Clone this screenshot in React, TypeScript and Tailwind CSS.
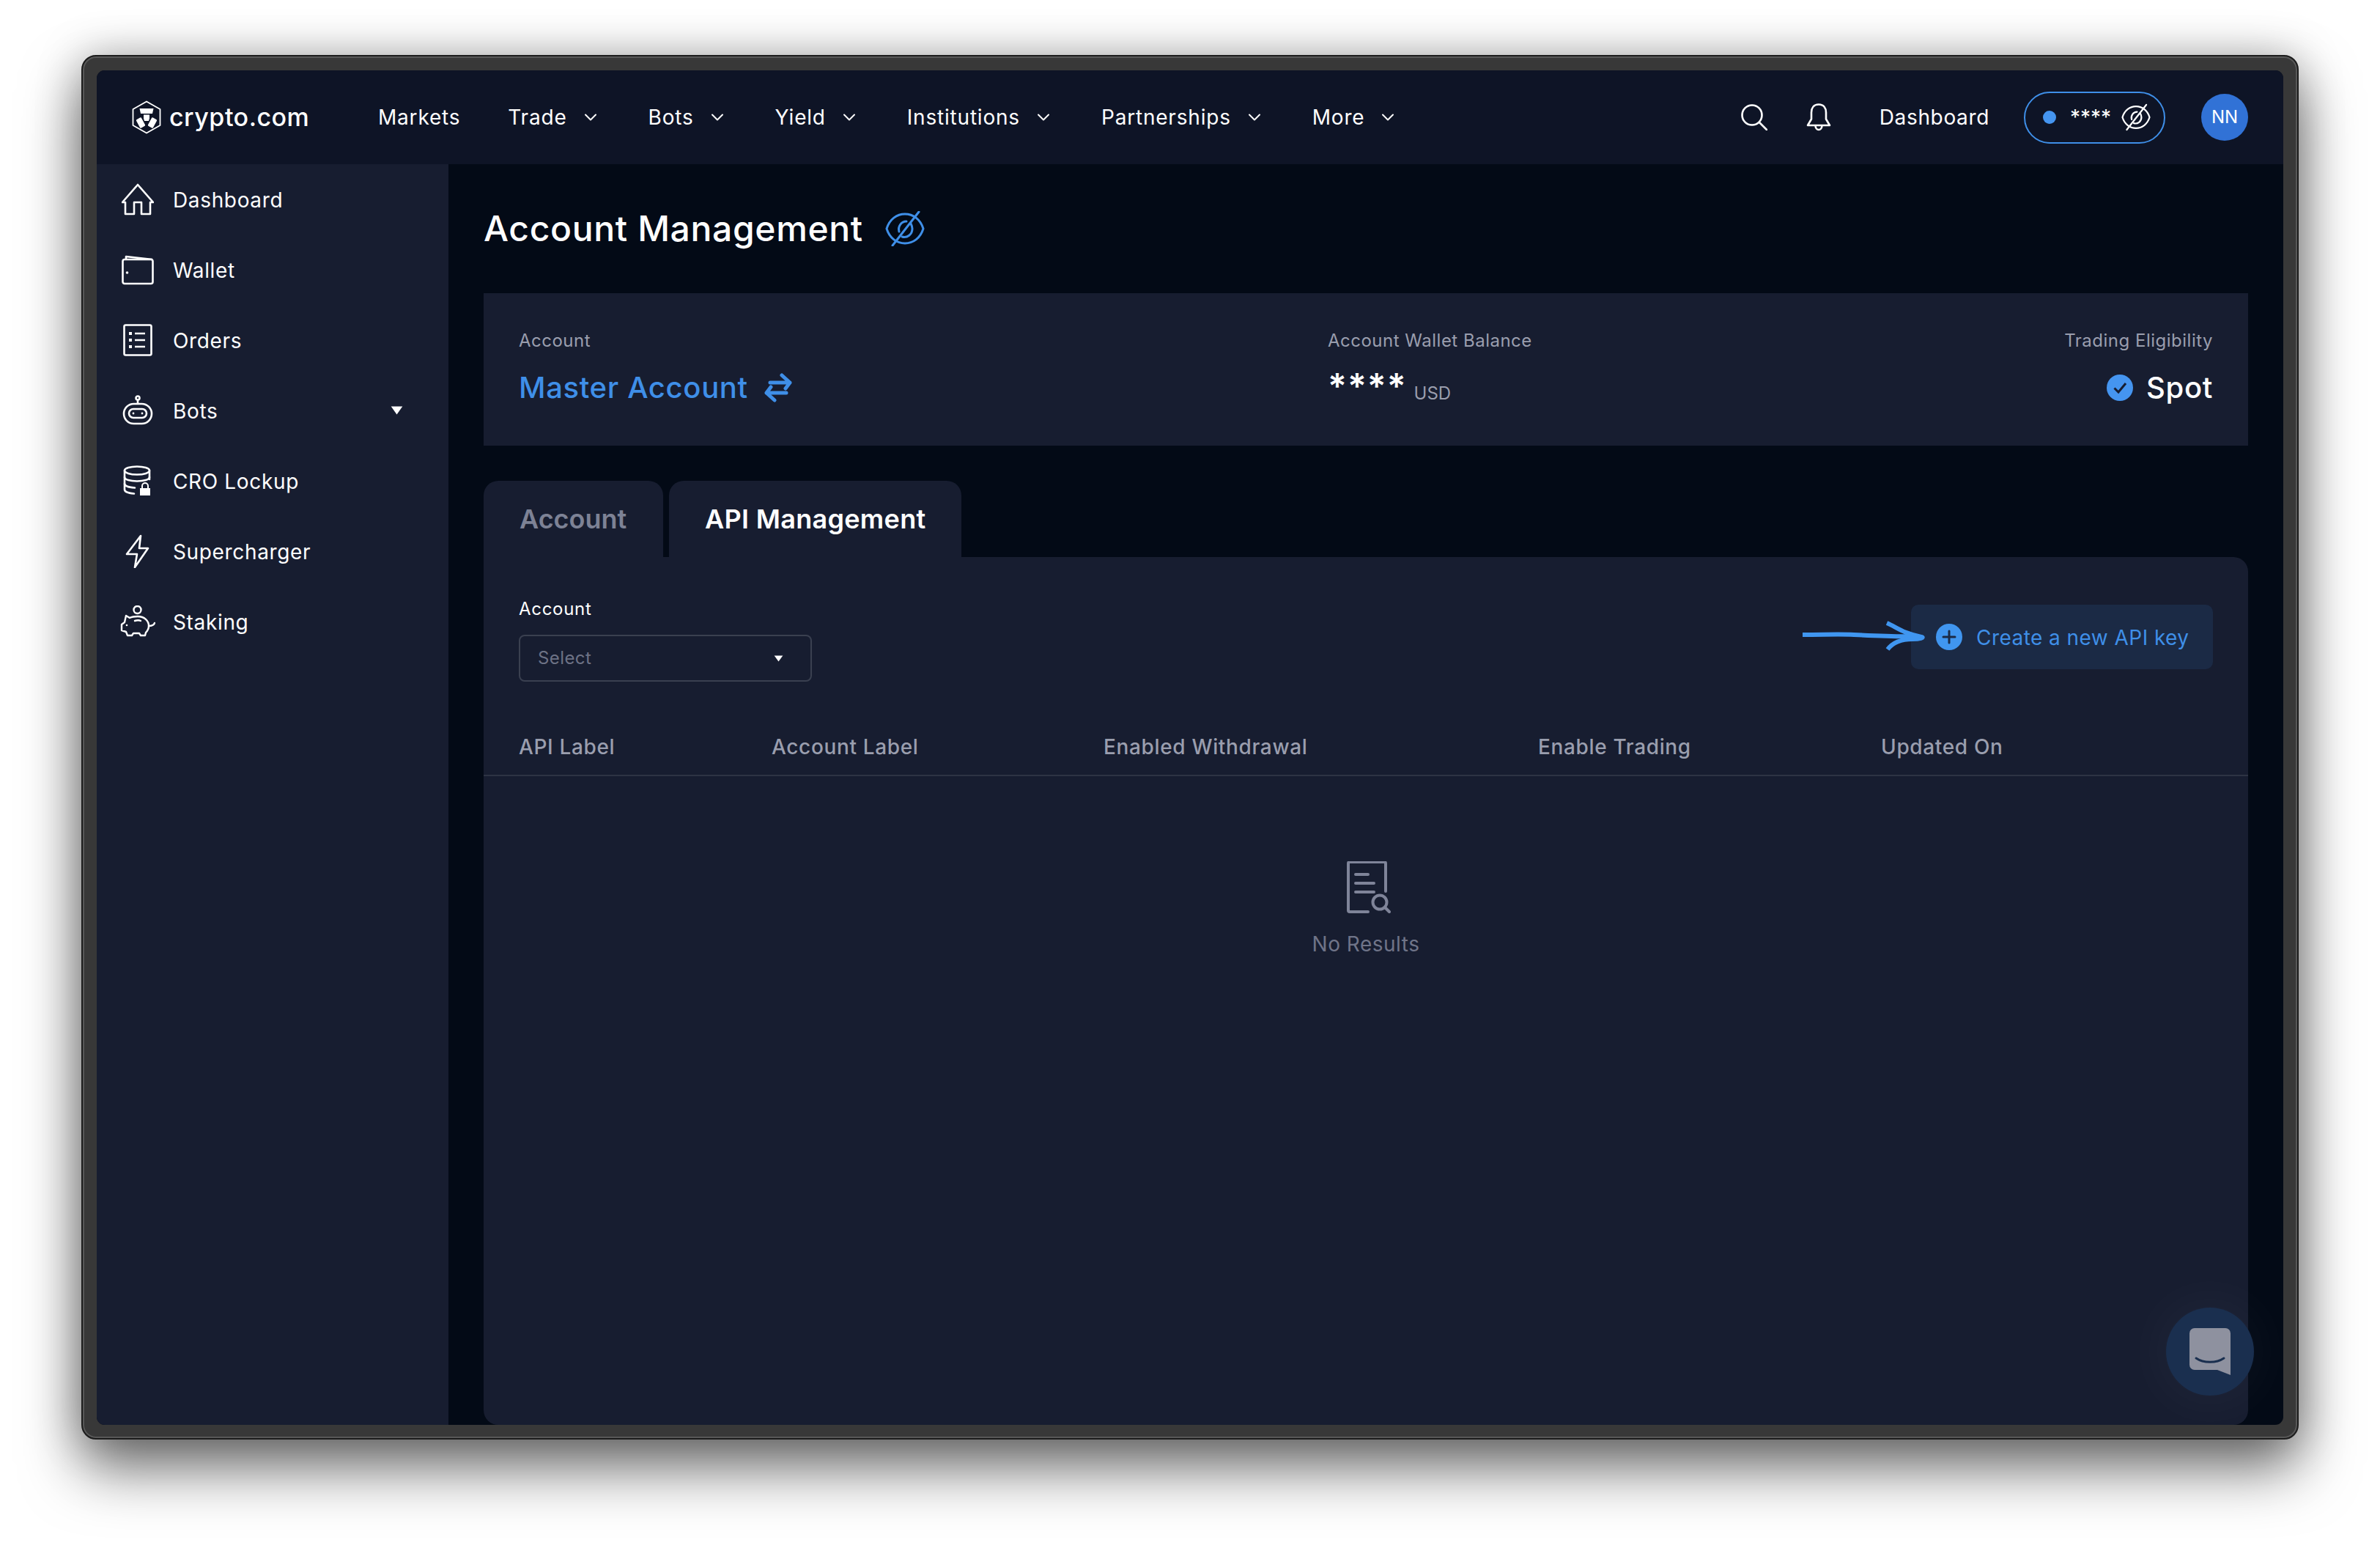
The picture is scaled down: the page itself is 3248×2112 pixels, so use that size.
import { ChevronDown } from 'lucide-react';

const NAV_ITEMS = [
  { label: 'Markets', menu: false },
  { label: 'Trade', menu: true },
  { label: 'Bots', menu: true },
  { label: 'Yield', menu: true },
  { label: 'Institutions', menu: true },
  { label: 'Partnerships', menu: true },
  { label: 'More', menu: true },
];

const COLUMNS = ['API Label', 'Account Label', 'Enabled Withdrawal', 'Enable Trading', 'Updated On'];

const Logo = () => (
  <svg viewBox="0 0 40 46" className="h-[46px] w-[40px]" fill="none">
    <path d="M20 1.500 38.500 12v22L20 44.500 1.500 34V12z" stroke="white" strokeWidth="1.800" strokeLinejoin="round" />
    <path d="M10.500 11h19l-1.500 7H12z" fill="white" />
    <path d="M16 19.500h8v5l-1 3.500h-6l-1-3.500z" fill="white" />
    <rect x="8" y="24" width="8" height="13" rx="1.500" transform="rotate(-28 12 30.500)" fill="white" />
    <rect x="24" y="24" width="8" height="13" rx="1.500" transform="rotate(28 28 30.500)" fill="white" />
  </svg>
);

const EyeOff = ({ className }: { className: string }) => (
  <svg viewBox="0 0 54 48" className={className} fill="none" stroke="currentColor" strokeWidth="3" strokeLinecap="round" strokeLinejoin="round">
    <path d="M2 24C6 11 16 4 27 4s21 7 25 20c-4 13-14 20-25 20S6 37 2 24z" />
    <path d="M46 1 10 47" />
    <path d="M23 35c7 2 14-3 14-11 0-3-1-5-2-7" />
    <path d="M19 28c-2-7 3-14 10-14" />
  </svg>
);

const HomeIcon = () => (
  <svg viewBox="0 0 44 44" className="h-[44px] w-[44px]" fill="none" stroke="white" strokeWidth="2.600" strokeLinejoin="round">
    <path d="M22 2 43 26h-4v16H27V26H17v16H5V26H1z" />
  </svg>
);

const WalletIcon = () => (
  <svg viewBox="0 0 44 44" className="h-[44px] w-[44px]" fill="none" stroke="white" strokeWidth="2.600" strokeLinejoin="round">
    <rect x="1.500" y="8" width="41" height="33" rx="2.500" />
    <path d="M6 8V4l36 4" />
    <circle cx="7.500" cy="26" r="1.800" fill="white" stroke="none" />
  </svg>
);

const OrdersIcon = () => (
  <svg viewBox="0 0 44 44" className="h-[44px] w-[44px]" fill="none" stroke="white" strokeWidth="2.600" strokeLinejoin="round">
    <rect x="3.500" y="1.500" width="37" height="41" rx="2" />
    <path d="M18 13h14M18 22h14M18 31h14" />
    <path d="M10 13h4M10 22h4M10 31h4" strokeWidth="4" />
  </svg>
);

const BotsIcon = () => (
  <svg viewBox="0 0 44 44" className="h-[44px] w-[44px]" fill="none" stroke="white" strokeWidth="2.600">
    <circle cx="22" cy="5" r="2.500" />
    <path d="M22 8v5" />
    <rect x="3" y="13" width="38" height="27" rx="13.500" />
    <rect x="10" y="20" width="24" height="12" rx="6" />
    <circle cx="16" cy="26" r="1.400" fill="white" stroke="none" />
    <circle cx="28" cy="26" r="1.400" fill="white" stroke="none" />
  </svg>
);

const LockupIcon = () => (
  <svg viewBox="0 0 44 44" className="h-[44px] w-[44px]" fill="none" stroke="white" strokeWidth="2.600" strokeLinecap="round">
    <ellipse cx="21" cy="8" rx="17" ry="5.500" />
    <path d="M4 8v26c0 3 6 5 13 5.500" />
    <path d="M38 8v12" />
    <path d="M4 17c0 3.500 8 5.500 17 5.500S38 20.500 38 17" />
    <path d="M4 26c0 3 6 5 14 5.500" />
    <rect x="25" y="32" width="14" height="10" fill="white" stroke="none" />
    <path d="M28 32v-3a4 4 0 0 1 8 0v3" strokeWidth="2" />
  </svg>
);

const BoltIcon = () => (
  <svg viewBox="0 0 44 46" className="h-[46px] w-[44px]" fill="none" stroke="white" strokeWidth="2.600" strokeLinejoin="round">
    <path d="M26 2 7 27h14l-3 18 18-26H24z" />
  </svg>
);

const PiggyIcon = () => (
  <svg viewBox="0 0 48 44" className="h-[44px] w-[48px]" fill="none" stroke="white" strokeWidth="2.400" strokeLinecap="round" strokeLinejoin="round">
    <circle cx="23.500" cy="6" r="5" />
    <path d="M8 14l5 3c3-1.500 7-2 11-2 9 0 15 6 15 13 0 4-2 7-4 9l-1 4h-6l-2-3h-8l-2 3h-6l-2-5-6-2v-8l4-3z" />
    <path d="M39 28c3 0 7-1 8-4" />
    <path d="M20 21c3-1 6-1 8 0" />
    <circle cx="9" cy="27" r="1.300" fill="white" stroke="none" />
  </svg>
);

const SIDE_ITEMS = [
  { label: 'Dashboard', icon: <HomeIcon /> },
  { label: 'Wallet', icon: <WalletIcon /> },
  { label: 'Orders', icon: <OrdersIcon /> },
  { label: 'Bots', icon: <BotsIcon />, caret: true },
  { label: 'CRO Lockup', icon: <LockupIcon /> },
  { label: 'Supercharger', icon: <BoltIcon /> },
  { label: 'Staking', icon: <PiggyIcon /> },
];

const Caret = ({ className }: { className: string }) => (
  <svg viewBox="0 0 14 10" className={className} fill="white">
    <path d="M0.500 0.500h13L7 9.500z" />
  </svg>
);

const Header = () => (
  <header className="flex h-[128px] shrink-0 items-center bg-[#0e1426] pr-[48px] pl-[48px] text-white">
    <div className="flex w-[336px] items-center gap-[11px]">
      <Logo />
      <span className="text-[34px] leading-none font-medium tracking-[0.5px]">crypto.com</span>
    </div>
    <nav className="flex items-center gap-[65px] text-[28px] tracking-[0.8px]">
      {NAV_ITEMS.map(item => (
        <div key={item.label} className="flex items-center gap-[18px]">
          <span>{item.label}</span>
          {item.menu && <ChevronDown className="h-[28px] w-[28px]" strokeWidth={1.700} />}
        </div>
      ))}
    </nav>
    <div className="ml-auto flex items-center">
      <svg viewBox="0 0 36 36" className="h-[36px] w-[36px]" fill="none" stroke="white" strokeWidth="2.600" strokeLinecap="round">
        <circle cx="15" cy="15" r="13.500" />
        <path d="M25 25 35 35" />
      </svg>
      <svg viewBox="0 0 34 38" className="ml-[53px] h-[38px] w-[34px]" fill="none" stroke="white" strokeWidth="2.600" strokeLinejoin="round">
        <path d="M17 1.500c-7 0-10 5-10 11v9L2 30h30l-5-8.500v-9c0-6-3-11-10-11z" />
        <path d="M12.500 30c0 8 9 8 9 0" />
      </svg>
      <span className="ml-[66px] text-[28px] tracking-[0.65px]">Dashboard</span>
      <div className="ml-[47px] flex h-[71px] w-[193px] items-center rounded-full border-2 border-[#3f8fe8] pl-[24px]">
        <span className="h-[18px] w-[18px] rounded-full bg-[#4595f0]" />
        <span className="ml-[19px] text-[28px] leading-none">****</span>
        <EyeOff className="ml-[14px] h-[40px] w-[40px] text-white" />
      </div>
      <div className="ml-[49px] flex h-[64px] w-[64px] items-center justify-center rounded-full bg-[#3172d6] text-[24px]">NN</div>
    </div>
  </header>
);

const Sidebar = () => (
  <aside className="flex w-[480px] shrink-0 flex-col bg-[#171d30] text-white">
    {SIDE_ITEMS.map(item => (
      <div key={item.label} className="flex h-[96px] items-center pr-[62px] pl-[32px]">
        <div className="flex w-[48px] justify-center">{item.icon}</div>
        <span className="ml-[24px] pt-[2px] text-[28px] tracking-[0.65px]">{item.label}</span>
        {item.caret && <Caret className="ml-auto h-[12px] w-[17px]" />}
      </div>
    ))}
  </aside>
);

const BalanceCard = () => (
  <section className="flex h-[208px] shrink-0 bg-[#171d30] px-[48px] pt-[51px]">
    <div className="w-[1104px]">
      <div className="text-[24px] leading-[28px] tracking-[0.5px] text-[#9a9eae]">Account</div>
      <div className="mt-[26px] flex items-center gap-[22px] text-[#3f8fe8]">
        <span className="text-[40px] leading-[48px] font-[550] tracking-[0.65px]">Master Account</span>
        <svg viewBox="0 0 38 40" className="h-[40px] w-[38px]" fill="none" stroke="currentColor" strokeWidth="5" strokeLinecap="round" strokeLinejoin="round">
          <path d="M8 13h27M24 3l11 10-6 8" />
          <path d="M30 27H3M14 37 3 27l6-8" />
        </svg>
      </div>
    </div>
    <div>
      <div className="text-[24px] leading-[28px] tracking-[0.5px] text-[#9a9eae]">Account Wallet Balance</div>
      <div className="mt-[24px] flex items-start">
        <span className="text-[48px] leading-[48px] font-semibold tracking-[1px] text-white">****</span>
        <span className="mt-[20px] ml-[10px] text-[24px] leading-[28px] text-[#9a9eae]">USD</span>
      </div>
    </div>
    <div className="ml-auto flex flex-col items-end">
      <div className="text-[24px] leading-[28px] tracking-[0.5px] text-[#9a9eae]">Trading Eligibility</div>
      <div className="mt-[26px] flex items-center gap-[18px]">
        <svg viewBox="0 0 36 36" className="h-[36px] w-[36px]">
          <circle cx="18" cy="18" r="18" fill="#4595f0" />
          <path d="M10.500 18.500 16 24l10-12" fill="none" stroke="#171d30" strokeWidth="3" />
        </svg>
        <span className="text-[40px] leading-[48px] font-[550] tracking-[0.65px] text-white">Spot</span>
      </div>
    </div>
  </section>
);

const Tabs = () => (
  <div className="mt-[48px] flex h-[104px] shrink-0 gap-[8px]">
    <div className="flex w-[245px] items-center rounded-t-[20px] bg-[#171d30] pl-[49px] text-[36px] font-semibold text-[#7d8295]">Account</div>
    <div className="flex w-[399px] items-center rounded-t-[20px] bg-[#171d30] pl-[49px] text-[36px] font-semibold tracking-[0.3px] text-white">API Management</div>
  </div>
);

const ApiPanel = () => (
  <section className="flex min-h-0 flex-1 flex-col rounded-tr-[20px] rounded-b-[20px] bg-[#171d30]">
    <div className="flex items-start justify-between px-[48px] pt-[57px]">
      <div>
        <div className="text-[24px] leading-[28px] tracking-[0.7px] text-white">Account</div>
        <div className="mt-[21px] flex h-[64px] w-[400px] items-center justify-between rounded-[8px] border-2 border-[#3a4050] pr-[37px] pl-[24px]">
          <span className="text-[24px] tracking-[0.4px] text-[#6d7285]">Select</span>
          <Caret className="h-[9px] w-[13px]" />
        </div>
      </div>
      <div className="relative mt-[8px] flex h-[88px] w-[412px] items-center rounded-[10px] bg-[#1b2a45] pl-[34px]">
        <svg viewBox="0 0 170 44" className="absolute top-[20px] left-[-149px] h-[44px] w-[170px]" fill="none" stroke="#4096f0" strokeWidth="6" strokeLinecap="round">
          <path d="M1 21c30 0 50-1 70 0s60 3 85 2" strokeLinecap="butt" />
          <path d="M116 5c14 6 22 14 47 19 5 1-2 3-12 3-18 0-28 6-34 14" strokeLinecap="butt" strokeLinejoin="round" />
        </svg>
        <svg viewBox="0 0 36 36" className="h-[36px] w-[36px] shrink-0">
          <circle cx="18" cy="18" r="18" fill="#4096f0" />
          <path d="M18 10v16M10 18h16" stroke="#1b2a45" strokeWidth="3" strokeLinecap="round" />
        </svg>
        <span className="ml-[19px] pt-[2px] text-[28px] tracking-[0.45px] text-[#3f8fe8]">Create a new API key</span>
      </div>
    </div>
    <div className="mt-[49px] grid h-[80px] grid-cols-[345px_453px_593px_468px_1fr] items-center border-b-2 border-[#2d3344] px-[48px] pt-[2px] text-[28px] font-medium tracking-[0.65px] text-[#9a9eae]">
      {COLUMNS.map(col => (
        <span key={col}>{col}</span>
      ))}
    </div>
    <div className="mt-[116px] flex flex-col items-center">
      <svg viewBox="0 0 60 72" className="ml-[8px] h-[72px] w-[60px]" fill="none" stroke="#7f8499" strokeWidth="4" strokeLinecap="round" strokeLinejoin="round">
        <path d="M29 69H4a2 2 0 0 1-2-2V3a2 2 0 0 1 2-2h47a2 2 0 0 1 2 2v38" />
        <path d="M12 18h17M12 30h25M12 42h25" />
        <circle cx="45" cy="56" r="9.500" strokeWidth="4" />
        <path d="M52 63l6 6" strokeWidth="4" />
      </svg>
      <span className="mt-[20px] text-[28px] tracking-[0.5px] text-[#6f7488]">No Results</span>
    </div>
  </section>
);

const ChatBubble = () => (
  <div className="absolute right-[40px] bottom-[40px] flex h-[120px] w-[120px] items-center justify-center rounded-full bg-[#1a2f4f] shadow-[0_0_90px_rgba(255,255,255,0.06)]">
    <svg viewBox="0 0 56 64" className="h-[64px] w-[56px]">
      <path d="M7 0h42a7 7 0 0 1 7 7v57l-18-7H7a7 7 0 0 1-7-7V7a7 7 0 0 1 7-7z" fill="#8e919f" />
      <path d="M9 41c10 7 28 7 38 0" fill="none" stroke="#1a2f4f" strokeWidth="3" strokeLinecap="round" />
    </svg>
  </div>
);

export default function App() {
  return (
    <div className="h-[2112px] w-[3248px] overflow-hidden bg-white pt-[75px] pl-[111px] font-['Inter',sans-serif]">
      <div className="h-[1889px] w-[3026px] rounded-[20px] border-2 border-[#1c1c1c] bg-[#383838] p-[19px] shadow-[0_40px_80px_rgba(0,0,0,0.55),0_0_60px_rgba(0,0,0,0.25),inset_0_0_0_2px_#585858]">
        <div className="relative flex h-[1848px] w-[2984px] flex-col overflow-hidden rounded-[11px] bg-[#030a16]">
          <Header />
          <div className="flex min-h-0 flex-1">
            <Sidebar />
            <main className="flex min-w-0 flex-1 flex-col px-[48px]">
              <div className="flex h-[176px] shrink-0 items-center gap-[30px]">
                <h1 className="text-[48px] font-[550] tracking-[0.65px] text-white">Account Management</h1>
                <EyeOff className="h-[48px] w-[54px] text-[#3f8fe8]" />
              </div>
              <BalanceCard />
              <Tabs />
              <ApiPanel />
            </main>
          </div>
          <ChatBubble />
        </div>
      </div>
    </div>
  );
}
